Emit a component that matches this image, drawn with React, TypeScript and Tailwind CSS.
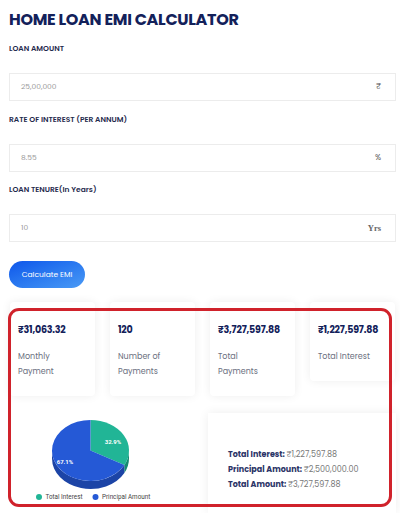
import React from 'react';

const font = { fontFamily: '"Poppins", "Open Sans", "Noto Sans", sans-serif' };

const fields = [
  { label: 'LOAN AMOUNT', value: '25,00,000', unit: '₹', mt: 'mt-[11px]' },
  { label: 'RATE OF INTEREST (PER ANNUM)', value: '8.55', unit: '%', mt: 'mt-[13px]' },
  { label: 'LOAN TENURE(In Years)', value: '10', unit: 'Yrs', mt: 'mt-[12px]' },
];

const stats = [
  { value: '₹31,063.32', label: ['Monthly', 'Payment'] },
  { value: '120', label: ['Number of', 'Payments'] },
  { value: '₹3,727,597.88', label: ['Total', 'Payments'] },
  { value: '₹1,227,597.88', label: ['Total Interest'] },
];

// point on the pie's top ellipse, angle in degrees clockwise from 12 o'clock
const cx = 80.5;
const cy = 39.5;
const rx = 38.5;
const ry = 30.5;
const depth = 8;
function pt(deg: number, dy = 0) {
  const r = (deg * Math.PI) / 180;
  return `${(cx + rx * Math.sin(r)).toFixed(2)} ${(cy - ry * Math.cos(r) + dy).toFixed(2)}`;
}
function side(a: number, b: number) {
  return `M ${pt(a)} A ${rx} ${ry} 0 0 1 ${pt(b)} L ${pt(b, depth)} A ${rx} ${ry} 0 0 0 ${pt(a, depth)} Z`;
}

function PieChart() {
  const split = 360 * 0.329;
  return (
    <svg width="185" height="94" viewBox="0 0 185 94">
      {/* side walls */}
      <path d={side(90, split)} fill="#158a71" />
      <path d={side(split, 270)} fill="#1c44a6" />
      {/* top face */}
      <path d={`M ${cx} ${cy} L ${pt(0)} A ${rx} ${ry} 0 0 1 ${pt(split)} Z`} fill="#21b596" />
      <path d={`M ${cx} ${cy} L ${pt(split)} A ${rx} ${ry} 0 1 1 ${pt(359.99)} Z`} fill="#2559d6" />
      <text x="103" y="33" fill="#fff" fontSize="6" fontWeight="700" textAnchor="middle" fontFamily="Roboto, sans-serif">32.9%</text>
      <text x="55" y="52.5" fill="#fff" fontSize="6" fontWeight="700" textAnchor="middle" fontFamily="Roboto, sans-serif">67.1%</text>
      {/* legend */}
      <circle cx="29" cy="86" r="3" fill="#21b596" />
      <text x="35.5" y="88.2" fill="#444" fontSize="6.3" fontFamily="Roboto, sans-serif">Total Interest</text>
      <circle cx="85.5" cy="86" r="3" fill="#2559d6" />
      <text x="92" y="88.2" fill="#444" fontSize="6.3" fontFamily="Roboto, sans-serif">Principal Amount</text>
    </svg>
  );
}

export default function App() {
  return (
    <div className="relative w-[400px] h-[513px] overflow-hidden bg-white" style={font}>
      <div className="pl-[9px] pr-[4px] pt-[8px]">
        {/* Header */}
        <h1 className="text-[16px] leading-[24px] font-bold text-[#13215a] tracking-[-0.3px]">
          HOME LOAN EMI CALCULATOR
        </h1>

        {/* Inputs */}
        {fields.map((f) => (
          <div key={f.label}>
            <div className={`${f.mt} text-[7.5px] leading-[12px] font-semibold text-[#1f2a4d]`}>{f.label}</div>
            <div className="mt-[18px] h-[28px] flex items-center justify-between border border-[#ececec] pl-[11px] pr-[14px]">
              <span className="text-[7.5px] text-[#9a9a9a]">{f.value}</span>
              {f.unit === 'Yrs' ? (
                <span className="text-[8.5px] font-bold text-[#666]" style={{ fontFamily: '"Liberation Serif", serif' }}>
                  Yrs
                </span>
              ) : (
                <span className="text-[8px] text-[#555]">{f.unit}</span>
              )}
            </div>
          </div>
        ))}

        {/* Button */}
        <button className="mt-[19px] h-[27px] w-[76px] rounded-full bg-gradient-to-br from-[#0f55ea] to-[#4a9af5] text-white text-[7.5px]">
          Calculate EMI
        </button>

        {/* Results cards */}
        <div className="mt-[14px] ml-[1px] flex items-start gap-[15px]">
          {stats.map((s) => (
            <div
              key={s.value}
              className="w-[85px] rounded-[4px] bg-white pl-[8px] pt-[22px] pb-[17px] shadow-[0_0_10px_rgba(0,0,0,0.07)]"
            >
              <div className="text-[9.5px] leading-[12px] font-bold text-[#13215a] tracking-[-0.2px]">{s.value}</div>
              <div className="mt-[13px] text-[8px] leading-[15px] text-[#6b6f80]">
                {s.label.map((l) => (
                  <div key={l}>{l}</div>
                ))}
              </div>
            </div>
          ))}
        </div>

        {/* Chart + summary */}
        <div className="mt-[15px] ml-[1px] flex gap-[13px]">
          <div className="w-[185px]">
            <PieChart />
          </div>
          <div className="flex-1 h-[100px] mt-[2px] bg-white pl-[20px] pt-[34px] shadow-[0_0_10px_rgba(0,0,0,0.07)] text-[8px] leading-[15px]">
            <div>
              <span className="font-bold text-[#2b3467]">Total Interest: </span>
              <span className="text-[#777]">₹1,227,597.88</span>
            </div>
            <div>
              <span className="font-bold text-[#2b3467]">Principal Amount: </span>
              <span className="text-[#777]">₹2,500,000.00</span>
            </div>
            <div>
              <span className="font-bold text-[#2b3467]">Total Amount: </span>
              <span className="text-[#777]">₹3,727,597.88</span>
            </div>
          </div>
        </div>
      </div>

      {/* Red highlight annotation */}
      <div className="absolute left-[8px] top-[308px] w-[384px] h-[199px] rounded-[11px] border-[3px] border-[#d0222b] pointer-events-none" />
    </div>
  );
}
